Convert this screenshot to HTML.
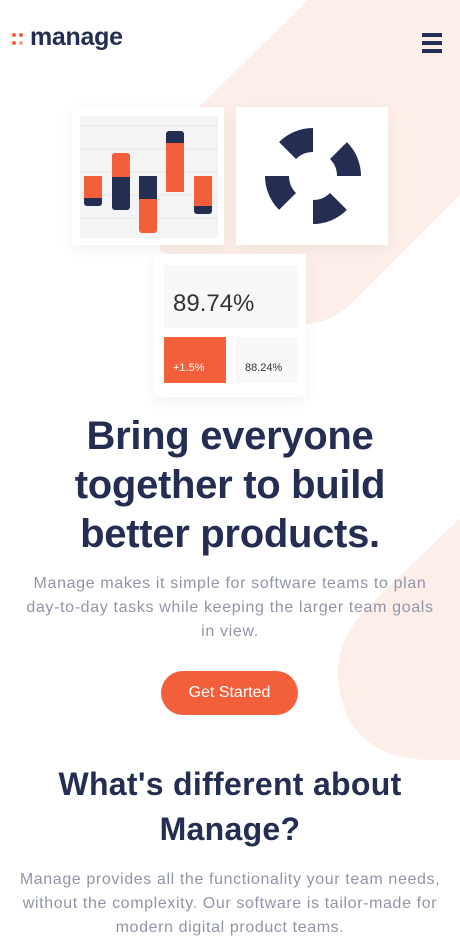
<!DOCTYPE html>
<html><head><meta charset="utf-8"><style>
*{margin:0;padding:0;box-sizing:border-box}
body{width:460px;height:927px;overflow:hidden;background:#fff;font-family:"Liberation Sans",sans-serif;position:relative;color:#242d52}
.bg{position:absolute;left:0;top:0}
.abs{position:absolute}
.card{position:absolute;background:#fff;box-shadow:0 4px 14px rgba(0,0,0,0.06)}
h1{position:absolute;left:0;top:412px;width:460px;text-align:center;font-size:40px;line-height:49px;font-weight:bold;color:#242d52;letter-spacing:-0.3px}
.p1{position:absolute;left:0;top:572px;width:460px;text-align:center;font-size:16px;line-height:24px;color:#9095a7;letter-spacing:0.65px;white-space:nowrap}
.btn{position:absolute;left:161px;top:671px;width:137px;height:44px;border-radius:22px;background:#f25f3a;color:#fff;font-size:16px;text-align:center;line-height:44px}
h2{position:absolute;left:0;top:762px;width:460px;text-align:center;font-size:32px;line-height:45px;font-weight:bold;color:#242d52;letter-spacing:0.3px}
.p2{position:absolute;left:0;top:868px;width:460px;text-align:center;font-size:16px;line-height:24px;color:#9095a7;letter-spacing:0.62px;white-space:nowrap}
</style></head><body>
<svg class="bg" width="460" height="927">
<path d="M308,0 H460 V195 L352,303 Q312,340 272,312 L160,250 L150,155 Z" fill="#fdeee9"/>
<path d="M460,518 L370,605 Q335,640 338,680 Q345,755 425,760 L460,760 Z" fill="#fdeee9"/>
</svg>
<svg class="abs" style="left:12px;top:33px" width="12" height="12"><circle cx="2" cy="2" r="2" fill="#f25f3a"/><circle cx="9" cy="2" r="2" fill="#f25f3a"/><circle cx="2" cy="10" r="2" fill="#f25f3a"/><circle cx="9" cy="10" r="2" fill="#f9a08a"/></svg>
<div class="abs" style="left:30px;top:23px;font-size:25px;font-weight:bold;color:#242d52;letter-spacing:-0.3px">manage</div>
<div class="abs" style="left:422px;top:33px;width:20px;height:4px;background:#242d52"></div>
<div class="abs" style="left:422px;top:41px;width:20px;height:4px;background:#242d52"></div>
<div class="abs" style="left:422px;top:49px;width:20px;height:4px;background:#242d52"></div>

<div class="card" style="left:72px;top:107px;width:152px;height:138px"></div>
<svg class="abs" style="left:80px;top:116px" width="138" height="122">
<rect x="0" y="0" width="138" height="122" fill="#f4f4f4"/>
<g stroke="#e6e6e6"><line x1="0" y1="10" x2="138" y2="10"/><line x1="0" y1="33" x2="138" y2="33"/><line x1="0" y1="56" x2="138" y2="56"/><line x1="0" y1="79" x2="138" y2="79"/><line x1="0" y1="102" x2="138" y2="102"/></g>
<rect x="4" y="60" width="18" height="30" rx="3" fill="#242d52"/><rect x="4" y="60" width="18" height="22" fill="#f25f3a"/>
<rect x="32" y="37" width="18" height="57" rx="3" fill="#242d52"/><rect x="32" y="37" width="18" height="24" rx="3" fill="#f25f3a"/><rect x="32" y="55" width="18" height="6" fill="#f25f3a"/>
<rect x="59" y="60" width="18" height="57" rx="3" fill="#f25f3a"/><rect x="59" y="60" width="18" height="23" fill="#242d52"/>
<rect x="86" y="15" width="18" height="61" rx="3" fill="#242d52"/><rect x="86" y="27" width="18" height="49" fill="#f25f3a"/>
<rect x="114" y="60" width="18" height="38" rx="3" fill="#242d52"/><rect x="114" y="60" width="18" height="30" fill="#f25f3a"/>
</svg>
<div class="card" style="left:236px;top:107px;width:152px;height:138px"></div>
<svg class="abs" style="left:0;top:0" width="460" height="260">
<g fill="#242d52" transform="translate(313,176)">
<path d="M-33.9,-33.9 A48,48 0 0 1 0,-48 L0,-24 A24,24 0 0 0 -17,-17 Z"/>
<path d="M33.9,-33.9 A48,48 0 0 1 48,0 L24,0 A24,24 0 0 0 17,-17 Z"/>
<path d="M33.9,33.9 A48,48 0 0 1 0,48 L0,24 A24,24 0 0 0 17,17 Z"/>
<path d="M-33.9,33.9 A48,48 0 0 1 -48,0 L-24,0 A24,24 0 0 0 -17,17 Z"/>
</g>
</svg>
<div class="card" style="left:154px;top:254px;width:152px;height:143px"></div>
<div class="abs" style="left:164px;top:265px;width:134px;height:63px;background:#f8f8f8"></div>
<div class="abs" style="left:173px;top:290px;font-size:24px;color:#333">89.74%</div>
<div class="abs" style="left:164px;top:337px;width:62px;height:46px;background:#f25f3a"></div>
<div class="abs" style="left:173px;top:362px;font-size:11px;color:#fff">+1.5%</div>
<div class="abs" style="left:236px;top:337px;width:62px;height:46px;background:#f8f8f8"></div>
<div class="abs" style="left:245px;top:362px;font-size:11px;color:#333">88.24%</div>

<h1>Bring everyone<br>together to build<br>better products.</h1>
<div class="p1">Manage makes it simple for software teams to plan<br>day-to-day tasks while keeping the larger team goals<br>in view.</div>
<div class="btn">Get Started</div>
<h2>What's different about<br>Manage?</h2>
<div class="p2">Manage provides all the functionality your team needs,<br>without the complexity. Our software is tailor-made for<br>modern digital product teams.</div>
</body></html>
